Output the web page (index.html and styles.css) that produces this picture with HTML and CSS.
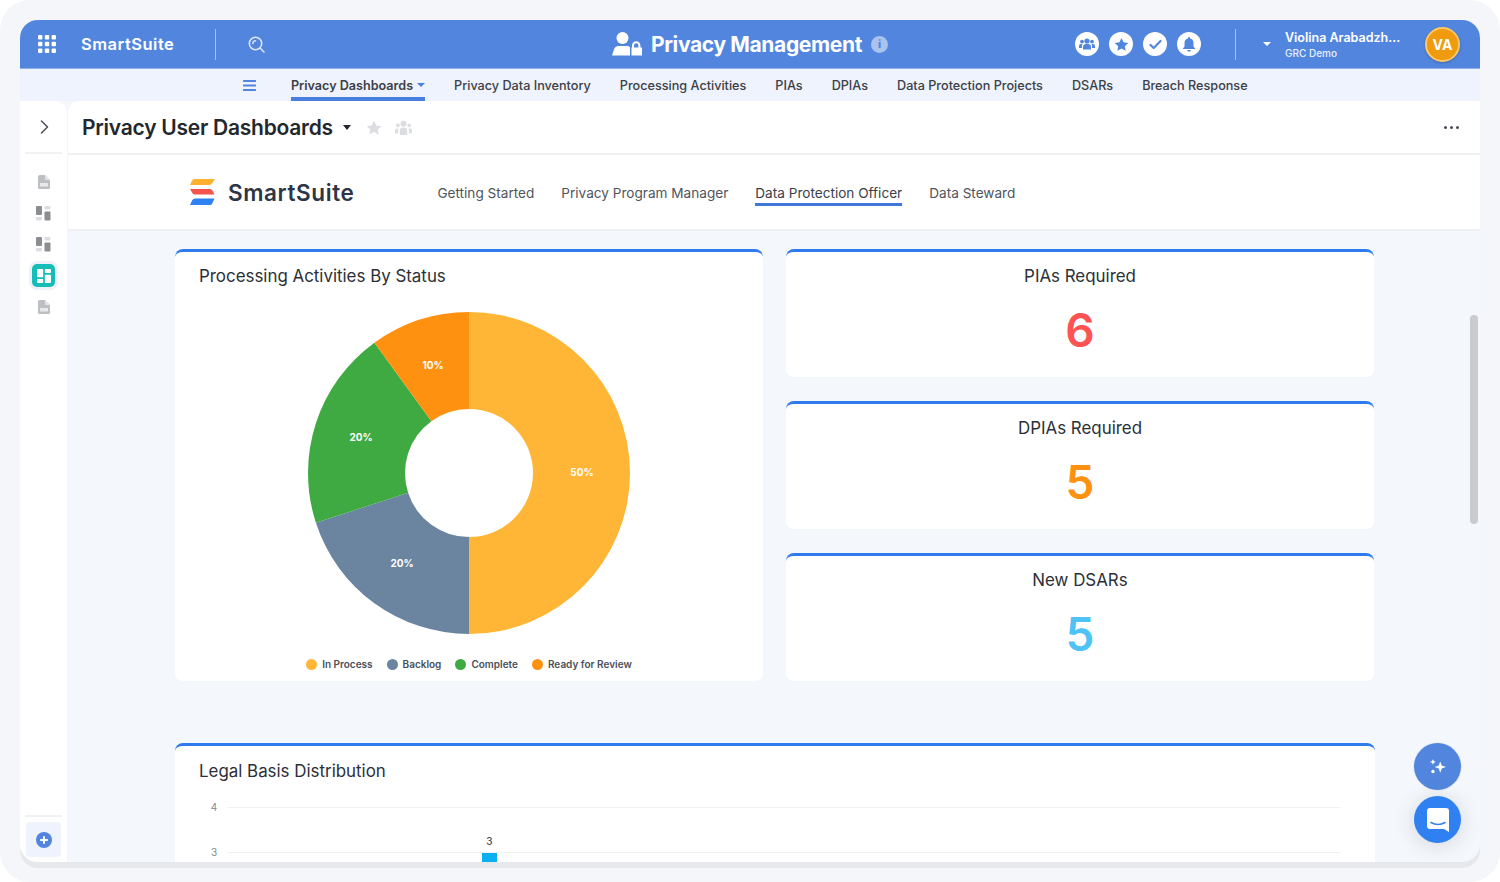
FILE: index.html
```html
<!DOCTYPE html>
<html lang="en">
<head>
<meta charset="utf-8">
<title>Privacy Management</title>
<link rel="stylesheet" href="styles.css">
</head>
<body>
<svg class="defs" width="0" height="0" aria-hidden="true">
  <symbol id="doc" viewBox="0 0 12 14"><path d="M2 0h5l5 5v7.500a1.500 1.500 0 0 1-1.500 1.500h-9A1.500 1.500 0 0 1 0 12.500v-11A1.500 1.500 0 0 1 1.500 0z" fill="#bdbfc2"/><path d="M7 0l5 5H8a1 1 0 0 1-1-1z" fill="#e4e5e7"/><rect x="2" y="8" width="8" height="3.500" fill="#e8e9ea"/></symbol>
  <symbol id="dash" viewBox="0 0 15 15"><rect x="0" y="0" width="6" height="9" rx="1" fill="#8a8d92"/><rect x="8.500" y="0" width="6" height="3.500" rx="1" fill="#dcdde0"/><rect x="0" y="11" width="6" height="3.500" rx="1" fill="#dcdde0"/><rect x="8.500" y="5.500" width="6" height="9" rx="1" fill="#8a8d92"/></symbol>
</svg>
<div class="frame">
  <div class="window">
    <header class="topbar">
      <div class="top-left">
        <svg class="apps" width="18" height="18" viewBox="0 0 18 18" fill="#fff"><rect width="4.400" height="4.400" rx="1"/><rect x="6.800" width="4.400" height="4.400" rx="1"/><rect x="13.600" width="4.400" height="4.400" rx="1"/><rect y="6.800" width="4.400" height="4.400" rx="1"/><rect x="6.800" y="6.800" width="4.400" height="4.400" rx="1"/><rect x="13.600" y="6.800" width="4.400" height="4.400" rx="1"/><rect y="13.600" width="4.400" height="4.400" rx="1"/><rect x="6.800" y="13.600" width="4.400" height="4.400" rx="1"/><rect x="13.600" y="13.600" width="4.400" height="4.400" rx="1"/></svg>
        <span class="brand">SmartSuite</span>
        <span class="vline"></span>
        <svg class="search" width="17" height="17" viewBox="0 0 17 17" fill="none" stroke="#dce7fa" stroke-width="1.500" stroke-linecap="round"><circle cx="7.500" cy="7.500" r="6.200"/><path d="M4.800 7.500a2.700 2.700 0 0 1 2.700-2.700M12 12l4 4"/></svg>
      </div>
      <div class="top-center">
        <svg width="30" height="24" viewBox="0 0 30 24" fill="#fff"><circle cx="10.500" cy="6" r="6"/><path d="M0 23.500l2.300-7A4 4 0 0 1 6 14h9a4 4 0 0 1 3 1.300v8.200z"/><path d="M20 15.500v-2a4.200 4.200 0 0 1 8.400 0v2H30v8H19.500v-8zm2 0h4.400v-2a2.200 2.200 0 0 0-4.400 0z" fill-rule="evenodd"/></svg>
        <h1 class="app-title">Privacy Management</h1>
        <span class="info">i</span>
      </div>
      <div class="top-right">
        <div class="round-icons">
          <span class="round"><svg width="16" height="14" viewBox="0 0 16 14" fill="#5286de"><circle cx="8" cy="4" r="2.600"/><circle cx="3" cy="4.600" r="1.900"/><circle cx="13" cy="4.600" r="1.900"/><path d="M4 12.500V10a3 3 0 0 1 3-3h2a3 3 0 0 1 3 3v2.500zM0 11V9a2 2 0 0 1 2-2h1.400A4 4 0 0 0 3 9.500V11zM16 11V9a2 2 0 0 0-2-2h-1.400a4 4 0 0 1 .4 2.500V11z"/></svg></span>
          <span class="round"><svg width="15" height="15" viewBox="0 0 24 24" fill="#5286de"><path d="M12 1.500l3.300 6.900 7.500 1-5.500 5.200 1.400 7.500L12 18.500l-6.700 3.600 1.400-7.500L1.200 9.400l7.500-1z"/></svg></span>
          <span class="round"><svg width="13" height="11" viewBox="0 0 13 11" fill="none" stroke="#5286de" stroke-width="2.200" stroke-linecap="round" stroke-linejoin="round"><path d="M1.500 6l3.200 3L11.500 2"/></svg></span>
          <span class="round"><svg width="14" height="15" viewBox="0 0 14 15" fill="#5286de"><path d="M7 0a1 1 0 0 1 1 1v.600A4.500 4.500 0 0 1 11.500 6v3.500L13.500 12H.5l2-2.500V6A4.500 4.500 0 0 1 6 1.600V1a1 1 0 0 1 1-1zM5.200 13h3.600a1.800 1.800 0 0 1-3.600 0z"/></svg></span>
        </div>
        <span class="vline vline-right"></span>
        <span class="caret caret-white"></span>
        <div class="user">
          <div class="user-name">Violina Arabadzh...</div>
          <div class="user-org">GRC Demo</div>
        </div>
        <span class="avatar">VA</span>
      </div>
    </header>

    <nav class="subnav">
      <svg class="burger" width="13" height="11" viewBox="0 0 13 11" fill="#5286de"><rect width="13" height="2" rx=".5"/><rect y="4.500" width="13" height="2" rx=".5"/><rect y="9" width="13" height="2" rx=".5"/></svg>
      <a class="nav-item nav-active">Privacy Dashboards<span class="caret caret-blue"></span></a>
      <a class="nav-item">Privacy Data Inventory</a>
      <a class="nav-item">Processing Activities</a>
      <a class="nav-item">PIAs</a>
      <a class="nav-item">DPIAs</a>
      <a class="nav-item">Data Protection Projects</a>
      <a class="nav-item">DSARs</a>
      <a class="nav-item">Breach Response</a>
    </nav>

    <div class="workspace">
      <aside class="sidebar">
        <div class="side-top">
          <svg width="9" height="14" viewBox="0 0 9 14" fill="none" stroke="#4a4f57" stroke-width="1.500" stroke-linecap="round" stroke-linejoin="round"><path d="M1.500 1l6 6-6 6"/></svg>
        </div>
        <div class="side-icons">
          <svg class="ico-doc"><use href="#doc"/></svg>
          <svg class="ico-dash"><use href="#dash"/></svg>
          <svg class="ico-dash"><use href="#dash"/></svg>
          <span class="side-active"><svg width="14" height="14" viewBox="0 0 17 17" fill="#fff"><rect width="7.500" height="10" rx="1"/><rect x="9.500" width="7.500" height="5" rx="1"/><rect y="12" width="7.500" height="5" rx="1"/><rect x="9.500" y="7" width="7.500" height="10" rx="1"/></svg></span>
          <svg class="ico-doc"><use href="#doc"/></svg>
        </div>
        <div class="side-bottom">
          <span class="add-btn"><svg width="16" height="16" viewBox="0 0 16 16"><circle cx="8" cy="8" r="8" fill="#5286de"/><path d="M8 4.200v7.600M4.200 8h7.600" stroke="#fff" stroke-width="2"/></svg></span>
        </div>
      </aside>

      <main class="main">
        <div class="title-bar">
          <h2 class="page-title">Privacy User Dashboards</h2>
          <span class="caret caret-dark"></span>
          <svg class="star" width="16" height="16" viewBox="0 0 24 24" fill="#dcdde0"><path d="M12 1l3.400 7.300 7.800 1-5.700 5.400 1.500 7.900L12 17.800l-7 3.800 1.500-7.900L.8 9.300l7.800-1z"/></svg>
          <svg class="people" width="17" height="15" viewBox="0 0 16 14" fill="#dcdde0"><circle cx="8" cy="3.500" r="2.800"/><circle cx="2.700" cy="5" r="1.700"/><circle cx="13.300" cy="5" r="1.700"/><path d="M4.500 14V10a3 3 0 0 1 3-3h1a3 3 0 0 1 3 3v4zM0 12.500V9.500A1.800 1.800 0 0 1 1.800 8H3v4.500zM16 12.500V9.500A1.800 1.800 0 0 0 14.200 8H13v4.500z"/></svg>
          <span class="more"><i></i><i></i><i></i></span>
        </div>

        <div class="brand-bar">
          <svg class="logo" width="25" height="26" viewBox="0 0 25 26"><path d="M4.500 0H25l-3 4.500a3 3 0 0 1-2.400 1.500H0l2-4.300A3 3 0 0 1 4.500 0z" fill="#ffb02e"/><path d="M0 10h20a3 3 0 0 1 2.500 1.500L24.500 15.500H5a3 3 0 0 1-2.500-1.300z" fill="#f4534e"/><path d="M5 19.500h19.500L22.500 24a3 3 0 0 1-2.600 2H0l2.200-4.800A3 3 0 0 1 5 19.500z" fill="#2f80f0"/></svg>
          <span class="brand-dark">SmartSuite</span>
          <div class="tabs">
            <a class="tab">Getting Started</a>
            <a class="tab">Privacy Program Manager</a>
            <a class="tab tab-active">Data Protection Officer</a>
            <a class="tab">Data Steward</a>
          </div>
        </div>

        <div class="content">
          <div class="grid">
            <section class="card chart-card">
              <h3 class="card-title">Processing Activities By Status</h3>
              <svg class="pie" width="322" height="322" viewBox="308 312 322 322">
                <path d="M469 312a161 161 0 0 1 0 322V537a64 64 0 0 0 0-128z" fill="#ffb636"/>
                <path d="M469 634a161 161 0 0 1-153.100-111.250L408.100 492.800A64 64 0 0 0 469 537z" fill="#6b84a0"/>
                <path d="M315.900 522.750a161 161 0 0 1 58.500-180.050L431.400 421.200a64 64 0 0 0-23.300 71.600z" fill="#3eaa41"/>
                <path d="M374.400 342.700A161 161 0 0 1 469 312V409a64 64 0 0 0-37.600 12.200z" fill="#ff9110"/>
                <text x="582" y="476" class="pie-label">50%</text>
                <text x="402" y="567" class="pie-label">20%</text>
                <text x="361" y="441" class="pie-label">20%</text>
                <text x="433" y="369" class="pie-label">10%</text>
              </svg>
              <ul class="legend">
                <li><i class="dot dot-process"></i>In Process</li>
                <li><i class="dot dot-backlog"></i>Backlog</li>
                <li><i class="dot dot-complete"></i>Complete</li>
                <li><i class="dot dot-ready"></i>Ready for Review</li>
              </ul>
            </section>
            <div class="stack">
              <section class="card stat"><h3 class="card-title">PIAs Required</h3><div class="num num-red">6</div></section>
              <section class="card stat"><h3 class="card-title">DPIAs Required</h3><div class="num num-orange">5</div></section>
              <section class="card stat"><h3 class="card-title">New DSARs</h3><div class="num num-blue">5</div></section>
            </div>
          </div>
          <section class="card legal">
            <h3 class="card-title">Legal Basis Distribution</h3>
            <svg class="bars" width="1200" height="75" viewBox="175 790 1200 75">
              <line x1="228" y1="807.500" x2="1340" y2="807.500" stroke="#f0f1f3"/>
              <line x1="228" y1="852.500" x2="1340" y2="852.500" stroke="#f0f1f3"/>
              <text x="214" y="811" class="axis">4</text>
              <text x="214" y="856" class="axis">3</text>
              <text x="489.500" y="845" class="bar-val">3</text>
              <rect x="482" y="853" width="15" height="12" fill="#0ab0f2"/>
            </svg>
          </section>
        </div>
      </main>
    </div>
    <div class="scroll-thumb"></div>
    <span class="fab fab-ai"><svg width="18" height="18" viewBox="0 0 16 16" fill="#fff"><path d="M10 3l1.300 3.700L15 8l-3.700 1.300L10 13 8.700 9.300 5 8l3.700-1.300z"/><path d="M3.500 1l.8 1.700L6 3.500l-1.700.8L3.500 6l-.8-1.700L1 3.500l1.700-.8z"/><circle cx="3.500" cy="12" r="1.500"/></svg></span>
    <span class="fab fab-chat"><svg width="22" height="24" viewBox="0 0 22 24"><path d="M3 0h16a3 3 0 0 1 3 3v21l-5-3H3a3 3 0 0 1-3-3V3a3 3 0 0 1 3-3z" fill="#fff"/><path d="M4 14.500q7 4 14 0" fill="none" stroke="#2f80f0" stroke-width="1.600" stroke-linecap="round"/></svg></span>
  </div>
</div>
</body>
</html>
```

FILE: styles.css
```css
* { box-sizing: border-box; margin: 0; padding: 0; }
html, body { width: 1500px; height: 882px; overflow: hidden; background: #fff; }
body { font-family: Inter, "Liberation Sans", sans-serif; color: #2b3038; }
.defs { display: block; height: 0; }

.frame { width: 1500px; height: 882px; padding: 20px; background: #f4f6f9; border-radius: 30px; }
.window { position: relative; display: flex; flex-direction: column; width: 1460px; height: 842px; overflow: visible; border-radius: 18px; background: #f4f7fc; box-shadow: 0 6px 0 #e6e8ec; }

/* top bar */
.topbar { display: grid; grid-template-columns: 1fr auto 1fr; align-items: center; flex: 0 0 49px; background: #5286de; border-bottom: 1px solid #8fb0ea; border-radius: 18px 18px 0 0; }
.top-left { display: flex; align-items: center; padding-left: 18px; }
.brand { width: 93px; margin-left: 25px; font-size: 16.500px; font-weight: 600; letter-spacing: .5px; color: #fff; white-space: nowrap; }
.vline { width: 1px; height: 31px; background: #a9c2ee; }
.top-left .vline { margin-left: 41px; }
.search { margin-left: 32px; }
.top-center { display: flex; align-items: center; gap: 9px; }
.app-title { font-size: 21px; font-weight: 700; letter-spacing: -.35px; color: #fff; }
.info { display: flex; align-items: center; justify-content: center; width: 17px; height: 17px; border-radius: 50%; background: #a9c2ee; color: #5286de; font-size: 11px; font-weight: 800; }
.top-right { display: flex; align-items: center; justify-content: flex-end; padding-right: 20px; }
.round-icons { display: flex; gap: 10px; }
.round { display: flex; align-items: center; justify-content: center; width: 24px; height: 24px; border-radius: 50%; background: #fff; }
.vline-right { margin-left: 34px; }
.caret { display: inline-block; width: 0; height: 0; border-left: 4px solid transparent; border-right: 4px solid transparent; border-top: 4px solid #fff; }
.caret-white { margin-left: 27px; }
.user { width: 138px; margin-left: 14px; color: #fff; }
.user-name { font-size: 12.500px; font-weight: 600; line-height: 17px; white-space: nowrap; }
.user-org { font-size: 10px; font-weight: 500; line-height: 14px; color: #e6eefb; }
.avatar { display: flex; align-items: center; justify-content: center; width: 35px; height: 35px; margin-left: 2px; border: 2px solid #ffc766; border-radius: 50%; background: #f09a0e; box-shadow: 0 1px 3px rgba(0,0,0,.2); color: #fff; font-size: 14px; font-weight: 700; }

/* sub nav */
.subnav { display: flex; align-items: stretch; flex: 0 0 32px; gap: 29px; padding-left: 223px; background: #eef3fd; }
.burger { align-self: center; margin-right: 6px; }
.nav-item { display: flex; align-items: center; gap: 4px; font-size: 12.650px; font-weight: 500; color: #3b4048; white-space: nowrap; }
.nav-active { border-bottom: 4px solid #4a7fe0; padding-top: 4px; font-size: 12.600px; font-weight: 600; }
.caret-blue { border-top-color: #4a7fe0; }

/* workspace */
.workspace { display: flex; flex: 1; min-height: 0; gap: 1px; }
.sidebar { display: flex; flex-direction: column; flex: 0 0 47px; background: #fff; border-radius: 0 12px 0 18px; }
.side-top { display: flex; align-items: center; justify-content: center; flex: 0 0 53px; margin: 0 5px; padding-left: 2px; border-bottom: 2px solid #f0f1f3; }
.side-icons { display: flex; flex-direction: column; align-items: center; flex: 1; padding-top: 21px; }
.ico-doc { width: 12px; height: 14px; margin-bottom: 17px; }
.ico-dash { width: 15px; height: 15px; margin-bottom: 16px; }
.side-active { display: flex; align-items: center; justify-content: center; width: 23px; height: 23px; margin: -4px 0 13px; border-radius: 5px; background: #14bdb8; box-shadow: 0 0 0 3px #eef1f7; }
.side-bottom { display: flex; flex-direction: column; flex: 0 0 47px; margin: 0 5px; padding: 5px 1px 5px; border-top: 2px solid #f0f1f3; }
.add-btn { display: flex; align-items: center; justify-content: center; flex: 1; border-radius: 4px; background: #eef3fd; }

.main { display: flex; flex-direction: column; flex: 1; min-width: 0; overflow: hidden; border-radius: 12px 0 18px 0; }
.title-bar { display: flex; align-items: center; flex: 0 0 54px; padding: 1px 21px 0 14px; background: #fff; border-bottom: 2px solid #f0f1f3; }
.page-title { font-size: 21px; font-weight: 600; letter-spacing: -.25px; color: #23272e; white-space: nowrap; }
.caret-dark { margin-left: 10px; border-left-width: 4.500px; border-right-width: 4.500px; border-top: 5px solid #23272e; }
.star { margin-left: 15px; }
.people { margin-left: 13px; }
.more { display: flex; gap: 3px; margin-left: auto; }
.more i { display: block; width: 3px; height: 3px; border-radius: 50%; background: #4a4f57; }

.brand-bar { display: flex; align-items: center; flex: 0 0 76px; padding-left: 122px; background: #fff; border-bottom: 2px solid #eef0f3; }
.brand-dark { margin-left: 13px; font-size: 22.500px; font-weight: 600; letter-spacing: .6px; color: #2e3547; }
.tabs { display: flex; align-items: stretch; gap: 27px; margin-left: 83px; height: 100%; padding: 25px 0 23px; }
.tab { display: flex; align-items: center; font-size: 13.600px; color: #50555d; white-space: nowrap; }
.tab-active { border-bottom: 3px solid #3f78d8; padding-top: 3px; color: #3b4048; }

.content { flex: 1; min-height: 0; overflow: hidden; padding: 18px 0 0 107px; }
.grid { display: grid; grid-template-columns: 588px 588px; gap: 23px; height: 432px; }
.stack { display: flex; flex-direction: column; gap: 24px; }
.card { background: #fff; border-top: 3px solid #2f7bee; border-radius: 8px; }
.card-title { font-size: 16.900px; font-weight: 400; line-height: 22px; color: #2b3038; }
.chart-card { display: flex; flex-direction: column; align-items: center; }
.chart-card .card-title { align-self: flex-start; padding: 13px 0 0 24px; }
.pie { display: block; margin-top: 25px; }
.pie-label { fill: #fff; font-size: 10px; font-weight: 700; text-anchor: middle; }
.legend { display: flex; gap: 14px; margin-top: 24px; list-style: none; font-size: 10px; font-weight: 600; line-height: 12px; color: #4a5058; }
.legend li { display: flex; align-items: center; gap: 5px; }
.dot { width: 11px; height: 11px; border-radius: 50%; }
.dot-process { background: #ffb636; }
.dot-backlog { background: #6b84a0; }
.dot-complete { background: #3eaa41; }
.dot-ready { background: #ff9110; }

.stat { flex: 1; text-align: center; }
.stat .card-title { padding-top: 13px; }
.num { margin-top: 15px; font-size: 46px; font-weight: 600; line-height: 56px; }
.num-red { color: #ff5252; }
.num-orange { color: #ff9110; }
.num-blue { color: #4fc3f7; }

.legal { width: 1200px; height: 130px; margin-top: 62px; overflow: hidden; }
.legal .card-title { padding: 14px 0 0 24px; }
.bars { display: block; margin-top: 8px; }
.axis { fill: #85898f; font-size: 10px; text-anchor: middle; }
.bar-val { fill: #4a4f57; font-size: 10px; font-weight: 500; text-anchor: middle; }

/* overlays */
.scroll-thumb { position: absolute; left: 1450px; top: 295px; width: 8px; height: 209px; border-radius: 4px; background: #c9cbcf; }
.fab { position: absolute; left: 1394px; display: flex; align-items: center; justify-content: center; width: 47px; height: 47px; border-radius: 50%; }
.fab-ai { top: 723px; background: #5286de; box-shadow: 0 0 0 1px #e9eef8; }
.fab-chat { top: 776px; background: #2f80f0; box-shadow: 0 2px 22px rgba(0,0,0,.14); }
```
